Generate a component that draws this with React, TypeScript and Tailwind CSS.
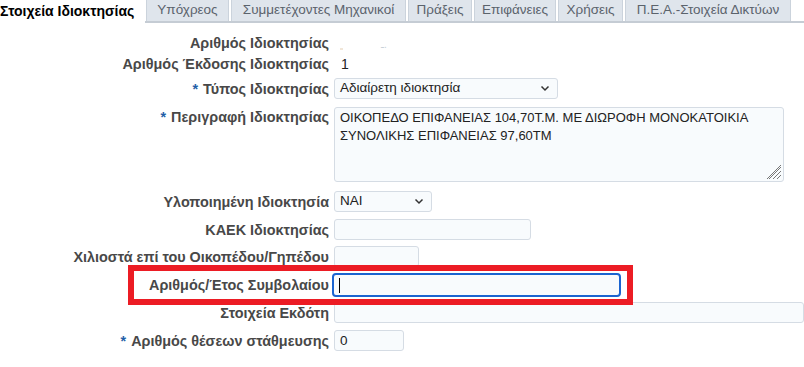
import React from "react";

const font = { fontFamily: '"Liberation Sans", Arial, sans-serif' };

function Chevron() {
  return (
    <svg width="10" height="7" viewBox="0 0 10 7" className="shrink-0">
      <path d="M1.5 1.5 L5 5 L8.5 1.5" fill="none" stroke="#333" strokeWidth="1.5" />
    </svg>
  );
}

function Label({ text, req }: { text: string; req?: boolean }) {
  return (
    <div className="w-[330px] shrink-0 text-right pr-[1px] text-[14.4px] font-bold text-[#484848] leading-[20px] whitespace-nowrap">
      {req && <span className="text-[#1f5fa8] mr-[5px]">*</span>}
      {text}
    </div>
  );
}

const inputCls =
  "h-[21px] border border-[#d5dce4] rounded-[3px] bg-[#f8fbfd]";

export default function App() {
  const tabs = ["Υπόχρεος", "Συμμετέχοντες Μηχανικοί", "Πράξεις", "Επιφάνειες", "Χρήσεις", "Π.Ε.Α.-Στοιχεία Δικτύων"];
  const tabW = [83, 175, 64, 82, 65, 166];
  return (
    <div className="w-[804px] h-[367px] bg-white overflow-hidden text-[#222]" style={font}>
      {/* tabs */}
      <div className="flex h-[23px] items-stretch">
        <div className="w-[145px] shrink-0 text-[14px] font-bold text-black leading-[22px] whitespace-nowrap">
          Στοιχεία Ιδιοκτησίας
        </div>
        <div className="flex-1 flex items-end border-b-2 border-[#c5ccd4] pl-[1px]">
          {tabs.map((t, i) => (
            <div
              key={t}
              style={{ width: tabW[i] }}
              className="h-[22px] mr-[2px] shrink-0 bg-[#dfe5ec] border border-b-0 border-[#cbd3dc] text-[13.5px] text-[#5b636c] leading-[20px] text-center whitespace-nowrap"
            >
              {t}
            </div>
          ))}
        </div>
      </div>

      <div className="flex flex-col">
        <div className="flex items-center h-[20px] mt-[10px]">
          <Label text="Αριθμός Ιδιοκτησίας" />
          <div className="ml-[6px] flex items-end gap-[30px] h-[14px]">
            <span className="w-[3px] h-[2px] bg-[#f1e6d8] ml-[4px]" />
            <span className="text-[#c8cfd8] text-[10px] leading-[10px] ml-[8px]">ـ.</span>
          </div>
        </div>
        <div className="flex items-center h-[20px] mt-[1px]">
          <Label text="Αριθμός Έκδοσης Ιδιοκτησίας" />
          <div className="ml-[11px] text-[14px]">1</div>
        </div>
        <div className="flex items-center h-[21px] mt-[4px]">
          <Label text="Τύπος Ιδιοκτησίας" req />
          <div className={`${inputCls} ml-[4px] w-[224px] flex items-center justify-between pl-[5px] pr-[7px] text-[13.5px]`}>
            <span>Αδιαίρετη ιδιοκτησία</span>
            <Chevron />
          </div>
        </div>
        <div className="flex items-start h-[75px] mt-[8px]">
          <Label text="Περιγραφή Ιδιοκτησίας" req />
          <div className="relative ml-[4px] w-[450px] h-[75px] border border-[#d5dce4] rounded-[3px] bg-[#f8fbfd] pl-[5px] pt-[1px] text-[13px] leading-[18px] text-[#222]">
            ΟΙΚΟΠΕΔΟ ΕΠΙΦΑΝΕΙΑΣ 104,70Τ.Μ. ΜΕ ΔΙΩΡΟΦΗ ΜΟΝΟΚΑΤΟΙΚΙΑ
            <br />
            ΣΥΝΟΛΙΚΗΣ ΕΠΙΦΑΝΕΙΑΣ 97,60ΤΜ
            <svg className="absolute right-[1px] bottom-[1px]" width="16" height="16" viewBox="0 0 16 16">
              <path d="M15 3 L3 15 M15 7 L7 15 M15 11 L11 15 M15 1 L1 15" stroke="#777" strokeWidth="1" />
            </svg>
          </div>
        </div>
        <div className="flex items-center h-[21px] mt-[9px]">
          <Label text="Υλοποιημένη Ιδιοκτησία" />
          <div className={`${inputCls} ml-[4px] w-[98px] flex items-center justify-between pl-[5px] pr-[7px] text-[13.5px]`}>
            <span>ΝΑΙ</span>
            <Chevron />
          </div>
        </div>
        <div className="flex items-center h-[21px] mt-[7px]">
          <Label text="ΚΑΕΚ Ιδιοκτησίας" />
          <div className={`${inputCls} ml-[4px] w-[197px]`} />
        </div>
        <div className="flex items-center h-[21px] mt-[6px]">
          <Label text="Χιλιοστά επί του Οικοπέδου/Γηπέδου" />
          <div className={`${inputCls} ml-[4px] w-[85px]`} />
        </div>
        <div className="relative flex items-center h-[24px] mt-[6px]">
          <Label text="Αριθμός/Έτος Συμβολαίου" />
          <div className="ml-[2px] w-[289px] h-[24px] border-2 border-[#1b64d0] rounded-[4px] bg-[#f8fbfd] flex items-center pl-[5px]">
            <span className="w-[1px] h-[15px] bg-black" />
          </div>
          <div className="absolute left-[128px] top-[-8px] w-[505px] h-[40px] border-[6px] border-[#ec1c24]" />
        </div>
        <div className="flex items-center h-[21px] mt-[5px]">
          <Label text="Στοιχεία Εκδότη" />
          <div className={`${inputCls} ml-[4px] w-[480px]`} />
        </div>
        <div className="flex items-center h-[21px] mt-[7px]">
          <Label text="Αριθμός θέσεων στάθμευσης" req />
          <div className={`${inputCls} ml-[4px] w-[70px] pl-[5px] text-[13.5px] leading-[19px]`}>0</div>
        </div>
      </div>
    </div>
  );
}
